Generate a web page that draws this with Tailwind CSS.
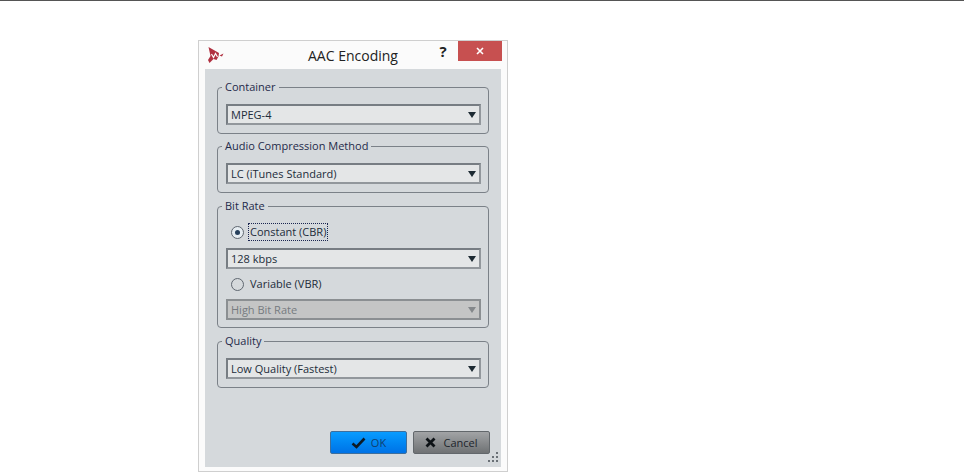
<!DOCTYPE html>
<html lang="en">
<head>
<meta charset="UTF-8" />
<title>AAC Encoding</title>
<script src="https://cdn.jsdelivr.net/npm/@tailwindcss/browser@4"></script>
</head>
<body class="bg-white h-[472px] overflow-hidden font-['Open_Sans',sans-serif] text-[#2a3140]">
<div class="border-t border-[#555] h-[40px]"></div>

<div class="ml-[198px] w-[310px] h-[432px] border border-[#cfcfcf] bg-[#fbfbfb] flex flex-col">
  <!-- title bar -->
  <div class="h-[28px] flex items-start relative">
    <svg class="absolute left-[9px] top-[6px]" width="16" height="16" viewBox="0 0 16 16">
      <path d="M0.5 0 L11 6 L10.5 9.5 L8.5 13 L5.5 12 L1.5 16 L0 13 L2.5 9 Z" fill="#b03040"/>
      <path d="M3.5 7 L5.5 10.5 L7.5 6.5 L9.5 10" fill="none" stroke="#fbfbfb" stroke-width="1.2"/>
      <path d="M11.5 8.5 L15.5 6.5 L14 9.5 Z" fill="#b03040"/>
    </svg>
    <div class="flex-1 text-center text-[14px] leading-[29px] pl-[74px] text-[#222]">AAC Encoding</div>
    <div class="w-[20px] mr-[5px] text-center text-[15px] font-bold leading-[21px] text-[#222]">?</div>
    <div class="w-[44px] h-[20px] mr-[5px] bg-[#c75050] flex items-center justify-center">
      <svg width="8" height="8" viewBox="0 0 8 8"><path d="M1 1 L7 7 M7 1 L1 7" stroke="#fff" stroke-width="1.6"/></svg>
    </div>
  </div>

  <!-- client area -->
  <div class="mx-[6px] flex-1 mb-[4px] bg-[#d5d9dc] px-[12px] pt-[12px] flex flex-col relative text-[11px]">
    <fieldset class="border border-[#7b8188] rounded-[4px] h-[53px] pl-[8px] pr-[7px]">
      <legend class="ml-[-4px] px-[3px] leading-[13px] text-[#1f2a4a] -translate-y-px">Container</legend>
      <div class="mt-[10px] h-[21px] border-2 border-[#777d83] border-b-[#92979c] border-r-[#92979c] bg-[#e4e6e7] flex items-center justify-between pl-[3px] pr-[3px]">
        <span class="text-[#222c3a] translate-y-px">MPEG-4</span>
        <svg width="8" height="6" viewBox="0 0 8 6"><path d="M0 0 H8 L4 6 Z" fill="#1d2a33"/></svg>
      </div>
    </fieldset>

    <fieldset class="border border-[#7b8188] rounded-[4px] h-[53px] pl-[8px] pr-[7px] mt-[6px]">
      <legend class="ml-[-4px] px-[3px] leading-[13px] text-[#1f2a4a] -translate-y-px">Audio Compression Method</legend>
      <div class="mt-[10px] h-[21px] border-2 border-[#777d83] border-b-[#92979c] border-r-[#92979c] bg-[#e4e6e7] flex items-center justify-between pl-[3px] pr-[3px]">
        <span class="text-[#222c3a] translate-y-px">LC (iTunes Standard)</span>
        <svg width="8" height="6" viewBox="0 0 8 6"><path d="M0 0 H8 L4 6 Z" fill="#1d2a33"/></svg>
      </div>
    </fieldset>

    <fieldset class="border border-[#7b8188] rounded-[4px] h-[128px] pl-[8px] pr-[7px] mt-[7px]">
      <legend class="ml-[-4px] px-[3px] leading-[13px] text-[#1f2a4a] -translate-y-px">Bit Rate</legend>
      <div class="flex items-center h-[20px] mt-[9px]">
        <span class="ml-[5px] w-[13px] h-[13px] rounded-full border border-[#5f6770] bg-[#e6edf2] flex items-center justify-center">
          <span class="w-[5px] h-[5px] rounded-full bg-[#26405c]"></span>
        </span>
        <span class="ml-[4px] px-px h-[18px] leading-[16px] border border-dotted border-[#1a2550] text-[#222c3a]">Constant (CBR)</span>
      </div>
      <div class="mt-[6px] h-[21px] border-2 border-[#777d83] border-b-[#92979c] border-r-[#92979c] bg-[#e4e6e7] flex items-center justify-between pl-[3px] pr-[3px]">
        <span class="text-[#222c3a] translate-y-px">128 kbps</span>
        <svg width="8" height="6" viewBox="0 0 8 6"><path d="M0 0 H8 L4 6 Z" fill="#1d2a33"/></svg>
      </div>
      <div class="flex items-center h-[20px] mt-[5px]">
        <span class="ml-[5px] w-[13px] h-[13px] rounded-full border border-[#5f6770] bg-[#d5d9dc]"></span>
        <span class="ml-[6px] text-[#222c3a]">Variable (VBR)</span>
      </div>
      <div class="mt-[5px] h-[21px] border-2 border-[#8b8f92] bg-[#c4c5c5] flex items-center justify-between pl-[3px] pr-[3px]">
        <span class="text-[#767b80] translate-y-px">High Bit Rate</span>
        <svg width="8" height="6" viewBox="0 0 8 6"><path d="M0 0 H8 L4 6 Z" fill="#84888b"/></svg>
      </div>
    </fieldset>

    <fieldset class="border border-[#7b8188] rounded-[4px] h-[53px] pl-[8px] pr-[7px] mt-[7px]">
      <legend class="ml-[-4px] px-[3px] leading-[13px] text-[#1f2a4a] -translate-y-px">Quality</legend>
      <div class="mt-[10px] h-[21px] border-2 border-[#777d83] border-b-[#92979c] border-r-[#92979c] bg-[#e4e6e7] flex items-center justify-between pl-[3px] pr-[3px]">
        <span class="text-[#222c3a] translate-y-px">Low Quality (Fastest)</span>
        <svg width="8" height="6" viewBox="0 0 8 6"><path d="M0 0 H8 L4 6 Z" fill="#1d2a33"/></svg>
      </div>
    </fieldset>

    <!-- buttons -->
    <div class="mt-auto mb-[13px] flex justify-end gap-[6px] mr-[-1px]">
      <button class="w-[77px] h-[23px] rounded-[2px] border border-[#3e6f9c] bg-gradient-to-b from-[#0a9cff] to-[#0072e6] flex items-center justify-center gap-[5px] text-[#0f3f70]">
        <svg width="15" height="12" viewBox="0 0 15 12"><path d="M1.5 6.5 L5.5 10 L13.5 1.5" fill="none" stroke="#0d1a26" stroke-width="2.6"/></svg>
        <span class="translate-y-px">OK</span>
      </button>
      <button class="w-[77px] h-[23px] rounded-[2px] border border-[#62676b] bg-gradient-to-b from-[#a2a4a6] to-[#6f7274] flex items-center justify-center gap-[7px] text-[#20252c]">
        <svg width="11" height="11" viewBox="0 0 11 11"><path d="M1.5 1.5 L9.5 9.5 M9.5 1.5 L1.5 9.5" stroke="#0d1216" stroke-width="2.8"/></svg>
        <span class="translate-y-px">Cancel</span>
      </button>
    </div>
    <svg class="absolute right-[2px] bottom-[4px]" width="11" height="11" viewBox="0 0 11 11" fill="#6a7076">
      <rect x="8" y="0" width="2" height="2"/><rect x="4" y="4" width="2" height="2"/><rect x="8" y="4" width="2" height="2"/><rect x="0" y="8" width="2" height="2"/><rect x="4" y="8" width="2" height="2"/><rect x="8" y="8" width="2" height="2"/>
    </svg>
  </div>
</div>
</body>
</html>
